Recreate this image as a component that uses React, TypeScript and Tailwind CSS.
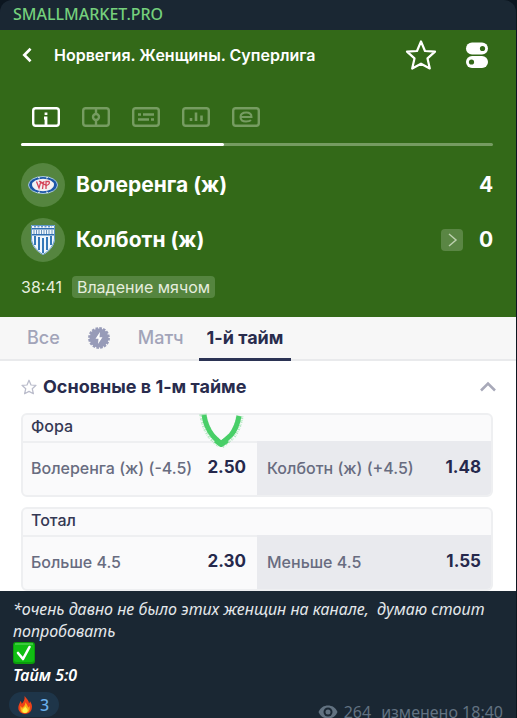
import React from "react";

const Star = ({ className, width }: { className: string; width: number }) => (
  <svg viewBox="0 0 32 32" className={className} fill="none" stroke="currentColor" strokeWidth={width} strokeLinejoin="round">
    <path d="M16 2.5 L20 12 L30 12.6 L22.5 19.4 L24.8 29.5 L16 24.700 L7.2 29.5 L9.5 19.4 L2 12.6 L12 12 Z" />
  </svg>
);

const Toggles = () => (
  <svg viewBox="0 0 24 28" className="h-7 w-6">
    <rect x="1" y="1.5" width="22" height="12" rx="6" fill="#fff" />
    <rect x="1" y="15" width="22" height="12" rx="6" fill="#fff" />
    <circle cx="17.5" cy="7.5" r="2.6" fill="#336918" />
    <circle cx="6.5" cy="21" r="2.6" fill="#336918" />
  </svg>
);

const Panel = ({ children }: { children: React.ReactNode }) => (
  <svg viewBox="0 0 28 20" className="h-5 w-7" fill="none" stroke="currentColor" strokeWidth="2.4">
    <rect x="1.2" y="1.2" width="25.6" height="17.6" rx="2.5" />
    {children}
  </svg>
);

const panels = [
  { name: "Информация", art: <path d="M14 5.5v2.6M12 11h2V19" strokeWidth="2.8" /> },
  { name: "Поле", art: <><path d="M14 1v5.5M14 13.5V19" /><circle cx="14" cy="10" r="3" /></> },
  { name: "Трансляция", art: <path d="M6 7.500h3M11 7.500h11M6 12.500h11M19 12.500h3" strokeWidth="2.400" /> },
  { name: "Статистика", art: <path d="M9 14v-3M14 14V5.500M19.500 14V8.500" strokeWidth="2.600" /> },
  { name: "События", art: <path d="M9 10h10.500c0-3-1.500-4.500-5.200-4.500S8.500 7 8.500 10s1.500 4.500 5.500 4.500c2.300 0 4-.4 5-1.400" strokeWidth="2" /> },
];

const VifCrest = () => (
  <svg viewBox="0 0 30 20" className="h-5 w-8">
    <ellipse cx="15" cy="10" rx="14.500" ry="8.500" fill="#1c56a8" stroke="#a9c9dc" strokeWidth="1" />
    <ellipse cx="15" cy="10" rx="11" ry="6.200" fill="#f3f1f3" />
    <path d="M8.500 6.500l2.500 6.500 2-7M14.500 14l1-7.500M13.500 8.500l3-2M18 14V6.500h3q1.500 2.500-2.500 4M11 6l8 5" fill="none" stroke="#d5455b" strokeWidth="1.300" />
    <path d="M10 2.500l2 .5M18 3l2-.5M10 17.500l2-.5M18 17l2 .5" stroke="#e8f0f5" />
  </svg>
);

const KolbotnCrest = () => (
  <svg viewBox="0 0 26 32" className="h-8 w-[26px]">
    <path d="M1 1h24v13c0 7-5 13-12 17C6 27 1 21 1 14z" fill="#f0f6fb" />
    <path d="M1.500 1.500h23V14c0 7-5 12.500-11.500 16.500C6.500 26.500 1.500 21 1.500 14z" fill="none" stroke="#5f97c8" />
    <path d="M2 4.800h22M2 10.800h22" stroke="#2f6fb0" strokeWidth="1.600" />
    <path d="M4 6v4M6.500 6v4M9 6v4M11.500 6v4M14 6v4M16.500 6v4M19 6v4M22 6v4" stroke="#6d97c0" />
    <path d="M5 12v9M9 13v13M13 14v15M17 13v13M21 12v9" stroke="#3477b8" strokeWidth="2" />
    <path d="M4 2.800h18" stroke="#2f6fb0" strokeDasharray="2 1.500" />
  </svg>
);

const BoltBadge = () => (
  <svg viewBox="0 0 24 24" className="h-6 w-6">
    <circle cx="12" cy="12" r="9.500" fill="#979bb8" />
    <circle cx="12" cy="12" r="9.800" fill="none" stroke="#979bb8" strokeWidth="2.200" strokeDasharray="2.600 1.250" />
    <path d="M13 6l-4.500 6.800h3L11 18l4.500-6.800h-3z" fill="#fff" />
  </svg>
);

const MarkerTick = () => (
  <svg viewBox="0 0 48 42" className="pointer-events-none absolute -top-1 left-[174px] h-[42px] w-12" fill="none" stroke="#49cf68" strokeLinejoin="round">
    <path d="M7 4C8 11 11 19 16 25L24 33L34 24C39 18 41 11 42 5" strokeWidth="5" />
    <path d="M6 3C7 12 10 19 15 26L24 34L35 25C40 18 42 11 43 4" strokeWidth="7.500" strokeDasharray="1.300 .7 .6 1.100" opacity=".4" />
    <path d="M19 29l5 4 6-4" strokeWidth="6" />
  </svg>
);

const Team = ({ name, score, crest, ball }: { name: string; score: string; crest: React.ReactNode; ball?: boolean }) => (
  <div className="flex h-11 items-center">
    <span className="flex h-11 w-11 items-center justify-center rounded-full bg-[#55853f]">{crest}</span>
    <span className="ml-[11px] flex-1 text-[21px] font-bold">{name}</span>
    {ball && (
      <span className="mr-4 flex h-[22px] w-[22px] items-center justify-center rounded-sm bg-[#5a8644] text-[#bbcfad]">
        <svg viewBox="0 0 12 16" className="h-4 w-3" fill="none" stroke="currentColor" strokeWidth="1.500"><path d="M3 2l7 6-7 6" /></svg>
      </span>
    )}
    <span className="w-[14px] text-center text-[21px] font-bold">{score}</span>
  </div>
);

type Odd = { label: string; value: string };
const Market = ({ title, odds, children }: { title: string; odds: Odd[]; children?: React.ReactNode }) => (
  <section className="relative rounded-md border-2 border-[#eeeff1] bg-[#fafafb]">
    <h3 className="h-[26px] px-2 text-base leading-[23px] font-medium text-[#353954]">{title}</h3>
    <div className="grid grid-cols-2">
      {odds.map((o, i) => (
        <button key={o.label} className={i ? "flex h-[54px] items-center justify-between rounded-br border-t-2 border-[#e9eaee] bg-[#e9eaee] px-2.5 pb-0.5" : "flex h-[54px] items-center justify-between border-t-2 border-[#eeeff1] pb-0.5 pl-2 pr-[11px]"}>
          <span className="text-base font-medium text-[#686c80]">{o.label}</span>
          <span className="text-[17px] font-bold text-[#25284c]">{o.value}</span>
        </button>
      ))}
    </div>
    {children}
  </section>
);

export default function App() {
  return (
    <div className="h-screen overflow-hidden bg-[#0c1620] pr-px font-['Inter','Noto_Sans',sans-serif]">
      <article className="h-full overflow-hidden rounded-t-xl bg-[#1a2733]">
        <header className="flex h-[30px] items-center px-[13px] pb-0.5 font-['Noto_Sans',sans-serif] text-base font-medium text-[#75d07c]">
          <a href="#channel">SMALLMARKET.PRO</a>
        </header>

        <section className="bg-[#336918] pb-[19px] pl-[21px] pr-[23px] text-white">
          <div className="flex h-[50px] items-center">
            <button aria-label="Назад" className="w-[33px]">
              <svg viewBox="0 0 12 18" className="h-4 w-3" fill="none" stroke="currentColor" strokeWidth="3"><path d="M10 2L3 9l7 7" /></svg>
            </button>
            <h1 className="flex-1 text-base font-semibold">Норвегия. Женщины. Суперлига</h1>
            <button aria-label="В избранное" className="mr-7"><Star className="h-8 w-8" width={2.2} /></button>
            <button aria-label="Настройки" className="mr-1"><Toggles /></button>
          </div>
          <nav className="flex gap-[22px] pl-[11px] pt-[27px]">
            {panels.map((p, i) => (
              <button key={p.name} aria-label={p.name} className={i ? "text-[#769c61]" : "text-white"}>
                <Panel>{p.art}</Panel>
              </button>
            ))}
          </nav>
          <div className="mt-4 h-[3px] rounded-full bg-[#769c61]"><div className="h-full w-[43%] rounded-full bg-white" /></div>
          <div className="mt-[17px] flex flex-col gap-[11px]">
            <Team name="Волеренга (ж)" score="4" crest={<VifCrest />} />
            <Team name="Колботн (ж)" score="0" crest={<KolbotnCrest />} ball />
          </div>
          <div className="mt-[14px] flex h-[22px] items-center gap-2.5 text-base text-[#e5edde]">
            <span>38:41</span>
            <span className="rounded bg-[#55853f] px-[5px] leading-[22px]">Владение мячом</span>
          </div>
        </section>

        <nav className="flex h-11 border-b-2 border-[#e9eaec] bg-[#f7f7f7] pl-[27px] text-lg font-medium text-[#a2a4b9]">
          <button>Все</button>
          <button aria-label="Быстрые ставки" className="ml-[27px]"><BoltBadge /></button>
          <button className="ml-[27px]">Матч</button>
          <button className="-mb-0.5 ml-[15px] border-b-[3px] border-[#2b3354] px-2 font-bold text-[#292c4d]">1-й тайм</button>
        </nav>

        <section className="bg-white pl-[21px] pr-[23px]">
          <div className="flex h-[52px] items-center">
            <button aria-label="Добавить рынок в избранное" className="mr-1.5 text-[#babccb]"><Star className="h-4 w-4" width={2.5} /></button>
            <h2 className="flex-1 text-lg font-bold text-[#292c4d]">Основные в 1-м тайме</h2>
            <button aria-label="Свернуть" className="mr-[-3px] text-[#a8a9b9]">
              <svg viewBox="0 0 16 12" className="h-3 w-4" fill="none" stroke="currentColor" strokeWidth="2.500"><path d="M1 9.500l7-7 7 7" /></svg>
            </button>
          </div>
          <div className="flex flex-col gap-2.5">
            <Market title="Фора" odds={[{ label: "Волеренга (ж) (-4.5)", value: "2.50" }, { label: "Колботн (ж) (+4.5)", value: "1.48" }]}>
              <MarkerTick />
            </Market>
            <Market title="Тотал" odds={[{ label: "Больше 4.5", value: "2.30" }, { label: "Меньше 4.5", value: "1.55" }]} />
          </div>
        </section>

        <footer className="pt-[7px] font-['Noto_Sans',sans-serif] text-base leading-[22px] text-[#e4e8eb]">
          <div className="px-[13px] italic">
            <p className="whitespace-pre-wrap">{"*очень давно не было этих женщин на канале,  думаю стоит попробовать"}</p>
            <svg viewBox="0 0 22 22" role="img" aria-label="Готово" className="h-[22px] w-[22px]">
              <rect width="22" height="22" rx="3" fill="#0b9d0b" />
              <rect x="1" y="1" width="20" height="19" rx="2.500" fill="#10bd13" />
              <path d="M2 2h18" stroke="#69d769" />
              <path d="M5 11l5 6 6.500-12" fill="none" stroke="#fff" strokeWidth="2.600" strokeLinecap="round" strokeLinejoin="round" />
            </svg>
            <p className="font-semibold text-white">Тайм 5:0</p>
          </div>
          <div className="flex items-start justify-between pl-[9px] pr-[13px] pt-1.5">
            <button className="flex h-[25px] items-center gap-[7px] rounded-full bg-[#1e3549] pl-2 pr-2.5 font-medium text-[#69afeb]">
              <svg viewBox="0 0 18 22" aria-label="Огонь" className="h-5 w-4">
                <path d="M8.500 1c2 3 5 5 5 8 .8-.7 1-1.500 1-2.500 2 3 3 5.500 2 9-1 4-4 5.500-7.500 5.500S1.500 19 1.500 14.500C1.300 11.500 3 9 4 6.500c1 1 1.300 2 1.300 3.500C7.500 7.500 9 5 8.500 1z" fill="#ef4218" />
                <path d="M9.500 8c2 3 2.500 4 3 6l1.500-2c1 4.500-.5 8-5 8S3.500 17 4 12c1 .5 1.300 1.500 1.500 2.500C8 12.500 9.500 11 9.500 8z" fill="#fcae1a" />
                <path d="M9.500 12.500c1 3 3 3 2.500 5-.4 1.700-1.500 2.500-3 2.500s-3-1-3-2.800c0-2 2.500-2.200 3.500-4.700z" fill="#fff04a" />
              </svg>
              3
            </button>
            <div className="flex items-center gap-1.5 pt-[9px] text-[#627281]">
              <svg viewBox="0 0 20 16" aria-label="Просмотры" className="h-4 w-5">
                <path d="M.5 8C2.500 3.500 6 1.500 10 1.500S17.500 3.500 19.500 8c-2 4.500-5.500 6.500-9.500 6.500S2.500 12.500.5 8z" fill="currentColor" />
                <circle cx="10" cy="8" r="4.500" fill="#1a2733" /><circle cx="10" cy="8" r="2.500" fill="currentColor" />
              </svg>
              <span>264</span>
              <span className="ml-1">изменено 18:40</span>
            </div>
          </div>
        </footer>
      </article>
    </div>
  );
}
